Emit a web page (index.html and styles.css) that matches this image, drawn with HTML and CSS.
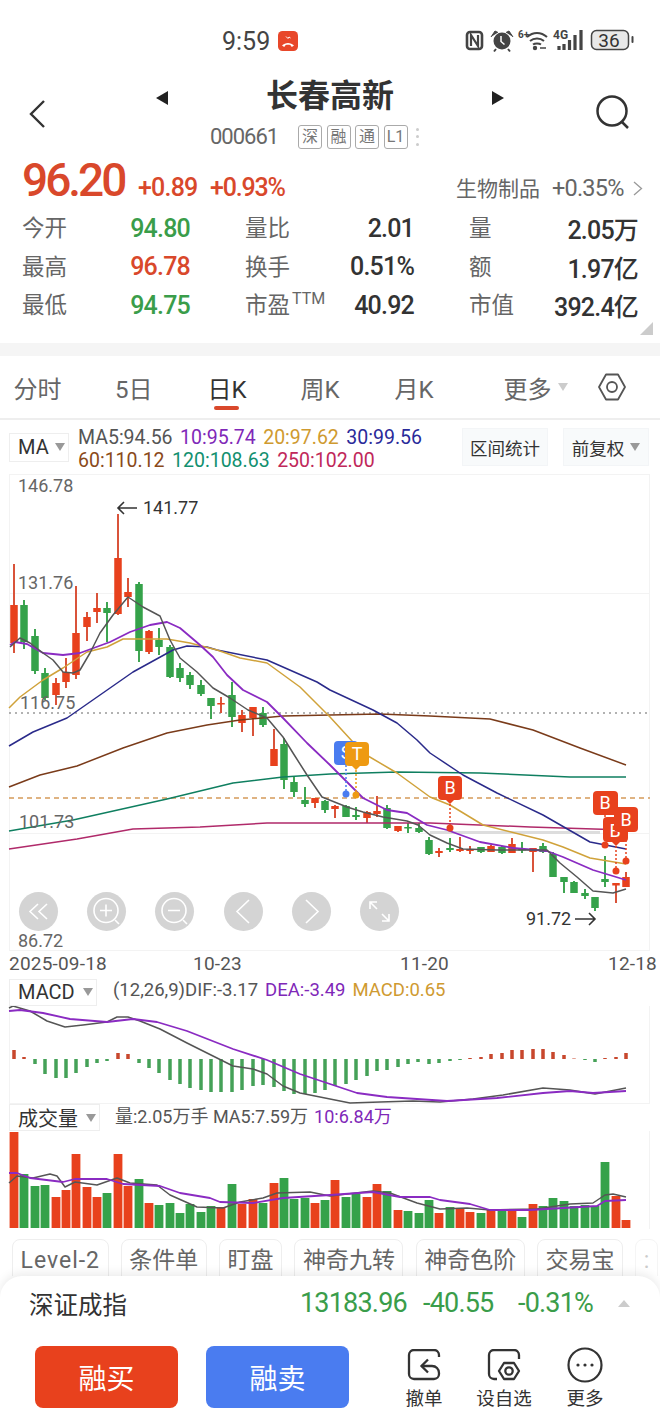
FILE: index.html
```html
<!DOCTYPE html>
<html lang="zh-CN">
<head>
    <meta charset="UTF-8">
    <meta name="viewport" content="width=device-width, initial-scale=1.0">
    <title>长春高新</title>
    <link rel="stylesheet" href="styles.css">
</head>
<body>
    <!-- 状态栏 -->
    <div class="status">
        <span class="status-time">9:59</span>
        <svg class="call-badge" width="20" height="20" viewBox="0 0 20 20">
            <rect width="20" height="20" rx="4.500" fill="#e8472a"/>
            <path d="M4 14.500c3.200-3.400 8.800-3.400 12 0l-2.200 1.500-1.500-2c-1.500-.5-3.100-.5-4.600 0l-1.500 2z" fill="#fff"/>
            <path d="M8 5.500l2 2 1-1.500 1.500 1" fill="none" stroke="#fff" stroke-width="1"/>
        </svg>
        <svg class="status-icons" width="170" height="24" viewBox="465 29 170 24">
            <rect x="467" y="32" width="15" height="17" rx="3" fill="none" stroke="#444" stroke-width="2.600"/>
            <path d="M471 46V35l7 11V35" fill="none" stroke="#444" stroke-width="2.200"/>
            <circle cx="502" cy="41" r="8.500" fill="#444"/>
            <path d="M491 37l4-6 3 1.500M513 37l-4-6-3 1.500" fill="#444" stroke="#444" stroke-width="1"/>
            <path d="M496 49l-2 2.500M508 49l2 2.500" stroke="#444" stroke-width="2"/>
            <path d="M501 36v5.500l3.500 3" fill="none" stroke="#fff" stroke-width="1.500"/>
            <text class="status-small" x="518" y="38">6+</text>
            <path d="M527 37c6-5.500 14-5.500 20 0M530 41c4-3.500 10-3.500 14 0M533 44.500c2-1.500 6-1.500 8 0" fill="none" stroke="#444" stroke-width="2"/>
            <circle cx="535" cy="48" r="2.200" fill="#444"/>
            <path d="M540 48h6" stroke="#444" stroke-width="1.500"/>
            <text class="status-small status-4g" x="553" y="39">4G</text>
            <path d="M559 50v-4M564 50v-6M569.500 50v-10M575 50v-15M581 50v-20" stroke="#444" stroke-width="3.200"/>
            <rect x="591.500" y="30.500" width="37" height="19" rx="5" fill="#e8e8e8" stroke="#444" stroke-width="1.500"/>
            <text class="status-batt" x="609" y="46.500" text-anchor="middle">36</text>
            <rect x="631.500" y="36" width="2" height="7" rx="1" fill="#444"/>
        </svg>
    </div>

    <!-- 标题 -->
    <header class="head">
        <svg class="head-back" width="16" height="30" viewBox="0 0 16 30"><path d="M15 2L2 15l13 13" fill="none" stroke="#333" stroke-width="2.400"/></svg>
        <div class="head-mid">
            <div class="head-title">
                <i class="tri-left"></i>
                <h1>长春高新</h1>
                <i class="tri-right"></i>
            </div>
            <div class="head-sub">
                <span class="code">000661</span>
                <span class="tag">深</span>
                <span class="tag">融</span>
                <span class="tag">通</span>
                <span class="tag">L1</span>
                <span class="tag-more"><i></i><i></i><i></i></span>
            </div>
        </div>
        <svg class="head-search" width="36" height="36" viewBox="0 0 36 36">
            <circle cx="17" cy="16" r="14.500" fill="none" stroke="#333" stroke-width="2.500"/>
            <path d="M27 27l6 6" stroke="#333" stroke-width="2.500"/>
        </svg>
    </header>

    <!-- 行情 -->
    <section class="quote">
        <div class="quote-main">
            <span class="price">96.20</span>
            <span class="change">+0.89</span>
            <span class="change change-pct">+0.93%</span>
            <span class="sector">生物制品</span>
            <span class="sector-pct">+0.35%</span>
            <svg class="sector-arrow" width="10" height="15" viewBox="0 0 10 15"><path d="M1 1l7.500 6.500L1 14" fill="none" stroke="#999" stroke-width="1.300"/></svg>
        </div>
        <div class="stats">
            <div class="stat"><span>今开</span><b class="down">94.80</b></div>
            <div class="stat"><span>量比</span><b>2.01</b></div>
            <div class="stat"><span>量</span><b>2.05万</b></div>
            <div class="stat"><span>最高</span><b class="up">96.78</b></div>
            <div class="stat"><span>换手</span><b>0.51%</b></div>
            <div class="stat"><span>额</span><b>1.97亿</b></div>
            <div class="stat"><span>最低</span><b class="down">94.75</b></div>
            <div class="stat"><span>市盈<sup>TTM</sup></span><b>40.92</b></div>
            <div class="stat"><span>市值</span><b>392.4亿</b></div>
        </div>
        <i class="corner"></i>
    </section>

    <!-- 周期 -->
    <nav class="tabs">
        <span>分时</span>
        <span>5日</span>
        <span class="active">日K</span>
        <span>周K</span>
        <span>月K</span>
        <span>更多<i class="caret caret-light"></i></span>
        <svg width="28" height="28" viewBox="0 0 28 28">
            <path d="M8 1.500h12L27 14l-7 12.500H8L1 14z" fill="none" stroke="#555" stroke-width="1.800" stroke-linejoin="round"/>
            <circle cx="14" cy="14" r="5" fill="none" stroke="#555" stroke-width="1.800"/>
        </svg>
    </nav>

    <div class="toolbar">
        <div class="pick pick-ma">MA<i class="caret"></i></div>
        <div class="ma-values">
            <div><span class="c5">MA5:94.56</span><span class="c10">10:95.74</span><span class="c20">20:97.62</span><span class="c30">30:99.56</span></div>
            <div><span class="c60">60:110.12</span><span class="c120">120:108.63</span><span class="c250">250:102.00</span></div>
        </div>
        <div class="tool-btn btn-range">区间统计</div>
        <div class="tool-btn">前复权<i class="caret"></i></div>
    </div>

    <!-- K线 -->
    <div class="kline">
        <svg class="chart" width="660" height="478" viewBox="0 474 660 478">
            <path class="frame" d="M9.500 474V951M649.500 474V951M9 474.500H650M9 950.500H650M9 593.500H650M9 833.500H650"/>
            <path d="M430 832.500H600" stroke="#ddd" stroke-width="3"/>
            <path class="dotted" d="M9 713H650"/>
            <path class="dashed" d="M9 798H650"/>

            <path class="wick-r" d="M14 564V653M56 678V705M66 658V688M76 586V679M87 612V641M97 593V623M118 514V615M128 578V607M149 630V654M221 697V713M242 710V732M253 707V736M274 729V766M315 798V808M335 805V818M367 811V823M377 796V817M398 826V832M439 848V857M460 837V852M470 846V854M491 845V852M512 838V853M533 848V872M616 883V903M626 872V887"/>
            <path class="wick-g" d="M24 600V649M35 629V674M45 668V700M107 602V642M139 582V662M159 628V655M170 645V678M180 663V682M190 672V689M201 680V696M211 698V719M232 682V727M263 707V727M284 738V789M294 777V797M305 787V807M325 800V813M346 805V817M356 807V820M387 805V829M408 823V833M419 823V833M429 837V855M450 838V852M481 847V853M502 846V854M522 842V853M543 843V853M553 852V877M564 877V893M574 881V893M585 889V899M595 897V911M605 856V887"/>
            <path class="body-r" d="M14 605V643M56 683V695M66 672V682M76 633V675M87 617V627M97 608V612M118 558V614M128 592V597M149 631V652M221 703V704.500M242 715V723M253 707V718M274 749V766M315 798V803M335 806V809M367 812V818M377 811V814M398 826V831M439 851V853M460 849V851M470 849V851M491 846V852M512 844V853M533 848V852M616 883V885.500M626 877V887"/>
            <path class="body-g" d="M24 605V642M35 636V671M45 673V698M107 608V613M139 584V651M159 640V647M170 647V677M180 668V678M190 675V685M201 685V694M211 698V706M232 695V717M263 713V725M284 744V780M294 782V792M305 800V804M325 801V810M346 806V817M356 815V817M387 808V828M408 827V828.500M419 828V832M429 840V854M450 848V850M481 847V852M502 847V853M522 849V850.500M543 846V852M553 854V877M564 877V882M574 882V893M585 893V896M595 897V908M605 879V882"/>

            <polyline class="ln l250" points="9,849 77,839 133,829 200,827 267,823 330,823 430,823 530,827 626,830"/>
            <polyline class="ln l120" points="9,831 73,820 167,799 233,783 283,777 330,774 397,772 480,773 570,777 626,777"/>
            <polyline class="ln l60" points="9,787 40,775 77,766 123,748 167,733 207,725 240,720 283,716 330,715 380,714 430,716 490,719 533,730 580,748 626,765"/>
            <polyline class="ln l30" points="9,746 33,732 67,718 100,695 133,672 173,650 187,646 207,647 217,650 267,660 317,682 330,690 373,710 397,723 417,740 430,753 463,775 497,793 543,815 590,842 626,849"/>
            <polyline class="ln l20" points="9,708 20,697 43,680 63,668 87,652 107,647 123,639 143,639 167,639 190,643 217,650 240,658 267,663 300,687 330,717 363,753 397,773 430,797 450,805 483,825 543,840 563,847 590,858 626,864"/>
            <polyline class="ln l10" points="10,645 15,642 27,644 43,653 63,655 80,653 110,642 130,632 150,625 167,622 180,628 200,645 213,657 227,675 243,690 267,702 283,718 307,743 330,765 347,782 363,798 387,810 407,813 427,825 447,830 480,842 513,848 547,851 563,857 593,870 626,880"/>
            <polyline class="ln l5" points="10,647 20,638 30,643 43,653 53,660 63,672 73,673 80,670 90,653 100,633 113,615 128,597 143,607 160,616 170,640 180,658 197,672 213,688 230,698 248,710 267,718 283,737 293,753 307,775 322,797 347,807 363,812 383,817 407,821 418,825 430,835 447,843 463,849 497,850 547,850 560,863 577,877 593,891 613,893 626,889"/>

            <text class="axis" x="18" y="492">146.78</text>
            <text class="axis" x="18" y="589">131.76</text>
            <text class="axis" x="20" y="709">116.75</text>
            <text class="axis" x="19" y="828">101.73</text>
            <text class="axis" x="18" y="947">86.72</text>
            <path class="arrow" d="M137 508H118M124 502l-6 6 6 6"/>
            <text class="mark" x="143" y="514">141.77</text>
            <text class="mark" x="526" y="925">91.72</text>
            <path class="arrow" d="M575 919H595M589 913l6 6-6 6"/>

            <!-- 买卖点 -->
            <path class="flag-line" stroke="#4a7cf0" d="M346 765V794"/>
            <path class="flag-line" stroke="#ee9a12" d="M356 766V795"/>
            <path class="flag-line" stroke="#e8411d" d="M450 800V828M605 815V845M616 842V871M626 832V861"/>
            <circle cx="346" cy="794" r="3.500" fill="#4a7cf0"/>
            <circle cx="356" cy="795" r="3.500" fill="#ee9a12"/>
            <circle cx="450" cy="828" r="3.500" fill="#e8411d"/>
            <circle cx="605" cy="845" r="3.500" fill="#e8411d"/>
            <circle cx="616" cy="871" r="3.500" fill="#e8411d"/>
            <circle cx="626" cy="861" r="3.500" fill="#e8411d"/>

            <rect x="334" y="741" width="24" height="24" rx="4" fill="#4a7cf0"/>
            <text class="flag" x="346" y="759">S</text>
            <path d="M352 766h8l-4 4z" fill="#ee9a12"/>
            <rect x="345" y="742" width="24" height="24" rx="4" fill="#ee9a12"/>
            <text class="flag" x="357" y="760">T</text>
            <rect x="438" y="776" width="24" height="24" rx="4" fill="#e8411d"/>
            <path d="M446 800h8l-4 4z" fill="#e8411d"/>
            <text class="flag" x="450" y="794">B</text>
            <rect x="593" y="791" width="25" height="24" rx="4" fill="#e8411d"/>
            <text class="flag" x="605" y="809">B</text>
            <rect x="603" y="817" width="25" height="25" rx="4" fill="#e8411d"/>
            <path d="M612 842h8l-4 4z" fill="#e8411d"/>
            <text class="flag" x="615" y="837">B</text>
            <rect x="614" y="807" width="24" height="25" rx="4" fill="#e8411d"/>
            <text class="flag" x="626" y="826">B</text>
        </svg>
        <div class="chart-tools">
            <span><svg viewBox="0 0 39 39"><path class="ic" d="M19 12l-8 7.500 8 7.500M28 12l-8 7.500 8 7.500"/></svg></span>
            <span><svg viewBox="0 0 39 39"><circle class="ic" cx="19" cy="18.500" r="12"/><path class="ic" d="M13 18.500h12M19 12.500v12M28 28l4 4"/></svg></span>
            <span><svg viewBox="0 0 39 39"><circle class="ic" cx="19" cy="18.500" r="12"/><path class="ic" d="M13 18.500h12M28 28l4 4"/></svg></span>
            <span><svg viewBox="0 0 39 39"><path class="ic" d="M25 8L13 19.500 25 31"/></svg></span>
            <span><svg viewBox="0 0 39 39"><path class="ic" d="M14 8l12 11.500L14 31"/></svg></span>
            <span><svg viewBox="0 0 39 39"><path class="ic" d="M10 10l7 7M22 22l7 7M10 17v-7h7M29 22v7h-7"/></svg></span>
        </div>
    </div>

    <div class="dates">
        <span>2025-09-18</span>
        <span>10-23</span>
        <span>11-20</span>
        <span>12-18</span>
    </div>

    <!-- MACD -->
    <div class="sub-head">
        <div class="pick pick-macd">MACD<i class="caret"></i></div>
        <div class="sub-values macd-values"><span class="c5">(12,26,9)DIF:-3.17</span><span class="c10">DEA:-3.49</span><span class="c20">MACD:0.65</span></div>
    </div>
    <svg class="chart" width="660" height="98" viewBox="0 1005 660 98">
        <path class="frame" d="M9.500 1005V1103M649.500 1005V1103M9 1102.500H650"/>
        <path class="bar-r" d="M14 1049V1058M24 1056V1058M118 1052V1058M128 1053V1058M470 1057V1058M481 1056V1058M491 1053V1058M502 1052V1058M512 1049V1058M522 1049V1058M533 1048V1058M543 1048V1058M553 1051V1058M564 1054V1058M574 1057.500V1058M605 1057V1058M616 1056V1058M626 1052V1058"/>
        <path class="bar-g" d="M35 1058V1063M45 1058V1073M56 1058V1077M66 1058V1077M76 1058V1072M87 1058V1066M97 1058V1062M107 1058V1060M139 1058V1062M149 1058V1067M159 1058V1072M170 1058V1079M180 1058V1083M190 1058V1087M201 1058V1089M211 1058V1091M221 1058V1091M232 1058V1091M242 1058V1089M253 1058V1085M263 1058V1084M274 1058V1086M284 1058V1090M294 1058V1093M305 1058V1093M315 1058V1092M325 1058V1089M335 1058V1085M346 1058V1083M356 1058V1079M367 1058V1075M377 1058V1070M387 1058V1069M398 1058V1066M408 1058V1063M418 1058V1061M429 1058V1063M439 1058V1062M450 1058V1060M460 1058V1059M585 1058V1059M595 1058V1061"/>
        <polyline class="ln l5" points="9,1007 13,1005 30,1010 47,1020 65,1026 83,1024 107,1021 117,1016 128,1016 140,1020 160,1028 187,1042 213,1055 233,1065 253,1068 267,1073 283,1085 300,1092 330,1098 350,1102 380,1101 413,1100 440,1101 473,1098 503,1094 543,1087 570,1089 595,1093 626,1087"/>
        <polyline class="ln l10" points="9,1010 20,1009 43,1012 70,1018 107,1021 133,1018 157,1021 187,1030 233,1048 267,1059 300,1073 330,1083 357,1092 387,1096 447,1100 497,1097 543,1092 570,1090 593,1092 626,1090"/>
    </svg>

    <!-- 成交量 -->
    <div class="sub-head vol-head">
        <div class="pick pick-vol">成交量<i class="caret"></i></div>
        <div class="sub-values vol-values"><span class="c5">量:2.05万手 MA5:7.59万</span><span class="c10">10:6.84万</span></div>
    </div>
    <svg class="chart" width="660" height="98" viewBox="0 1130 660 98">
        <path class="frame" d="M649.500 1130V1228"/>
        <path class="vol-r" d="M14 1131V1227M56 1196V1227M66 1189V1227M76 1153V1227M87 1186V1227M97 1196V1227M118 1153V1227M128 1185V1227M149 1202V1227M221 1206V1227M242 1203V1227M253 1198V1227M274 1182V1227M315 1202V1227M335 1179V1227M367 1196V1227M377 1183V1227M398 1209V1227M439 1212V1227M460 1208V1227M470 1211V1227M491 1209V1227M512 1208V1227M533 1203V1227M616 1195V1227M626 1219V1227"/>
        <path class="vol-g" d="M24 1173V1227M35 1185V1227M45 1184V1227M107 1192V1227M139 1178V1227M159 1204V1227M170 1202V1227M180 1212V1227M190 1203V1227M201 1211V1227M211 1205V1227M232 1183V1227M263 1202V1227M284 1177V1227M294 1198V1227M305 1197V1227M325 1199V1227M346 1196V1227M356 1193V1227M387 1190V1227M408 1210V1227M419 1212V1227M429 1199V1227M450 1206V1227M481 1212V1227M502 1208V1227M522 1216V1227M543 1205V1227M553 1197V1227M564 1200V1227M574 1205V1227M585 1204V1227M595 1205V1227M605 1161V1227"/>
        <polyline class="ln l5" points="9,1182 17,1175 33,1177 50,1173 57,1175 65,1186 75,1181 97,1184 117,1177 130,1182 157,1184 170,1194 197,1206 223,1207 240,1201 263,1197 277,1192 310,1191 330,1195 373,1190 390,1192 417,1202 440,1208 467,1207 490,1209 537,1208 570,1203 593,1202 605,1194 613,1193 626,1196"/>
        <polyline class="ln l10" points="9,1172 17,1172 30,1177 63,1181 75,1178 107,1178 123,1183 160,1185 180,1192 210,1197 220,1201 253,1202 283,1197 330,1194 373,1191 400,1196 430,1196 440,1199 470,1203 490,1209 530,1209 563,1207 597,1205 605,1200 626,1199"/>
    </svg>

    <div class="chips">
        <span class="chip chip-latin">Level-2</span>
        <span class="chip">条件单</span>
        <span class="chip">盯盘</span>
        <span class="chip">神奇九转</span>
        <span class="chip">神奇色阶</span>
        <span class="chip">交易宝</span>
        <span class="chip chip-fade">:</span>
    </div>

    <!-- 底部 -->
    <footer class="sheet">
        <div class="index-row">
            <span class="index-name">深证成指</span>
            <span class="index-num">13183.96</span>
            <span class="index-num">-40.55</span>
            <span class="index-num">-0.31%</span>
            <i class="index-tri"></i>
        </div>
        <div class="trade-row">
            <button class="trade buy">融买</button>
            <button class="trade sell">融卖</button>
            <div class="act act-cancel">
                <svg width="34" height="32" viewBox="0 0 34 32">
                    <path d="M32 8V6a5 5 0 0 0-5-5H7a5 5 0 0 0-5 5V25a5 5 0 0 0 5 5H27a5 5 0 0 0 5-5V24c0-4-3-7-7-7H14.500" fill="none" stroke="#333" stroke-width="2.300"/>
                    <path d="M21 10.500L14.500 17l6.500 6.500" fill="none" stroke="#333" stroke-width="2.300"/>
                </svg>
                <span>撤单</span>
            </div>
            <div class="act act-watch">
                <svg width="34" height="32" viewBox="0 0 34 32">
                    <path d="M32 10V6a5 5 0 0 0-5-5H7a5 5 0 0 0-5 5V25a5 5 0 0 0 5 5H10" fill="none" stroke="#333" stroke-width="2.300"/>
                    <path d="M17 14h10l5 8-5 8H17l-5-8z" fill="none" stroke="#333" stroke-width="2.300" stroke-linejoin="round"/>
                    <circle cx="22" cy="22" r="3.700" fill="none" stroke="#333" stroke-width="2.300"/>
                </svg>
                <span>设自选</span>
            </div>
            <div class="act act-more">
                <svg width="36" height="36" viewBox="0 0 36 36">
                    <circle cx="18" cy="18" r="16.500" fill="none" stroke="#333" stroke-width="2.200"/>
                    <circle cx="11" cy="18" r="1.600" fill="#333"/>
                    <circle cx="18" cy="18" r="1.600" fill="#333"/>
                    <circle cx="25" cy="18" r="1.600" fill="#333"/>
                </svg>
                <span>更多</span>
            </div>
        </div>
    </footer>
</body>
</html>
```

FILE: styles.css
```css
* {
    box-sizing: border-box;
}
html, body {
    margin: 0;
    padding: 0;
}
body {
    width: 660px;
    height: 1420px;
    overflow: hidden;
    background: #fff;
    color: #333;
    font-family: Roboto, "Noto Sans CJK SC", sans-serif;
}
i {
    display: block;
    font-style: normal;
}

/* 状态栏 */
.status {
    position: relative;
    height: 76px;
    padding: 6px 0 0 222px;
    display: flex;
    align-items: center;
}
.status-time {
    font-size: 25px;
    color: #444;
    width: 56px;
}
.status-icons {
    position: absolute;
    left: 465px;
    top: 29px;
}
.status-small {
    font-size: 10px;
    font-weight: 700;
    fill: #444;
}
.status-4g {
    font-size: 12px;
}
.status-batt {
    font-size: 19px;
    fill: #333;
}

/* 标题 */
.head {
    height: 74px;
    display: flex;
    align-items: center;
}
.head-back {
    margin-left: 29px;
    margin-top: 1px;
}
.head-mid {
    width: 348px;
    margin-left: 111px;
}
.head-title {
    height: 36px;
    display: flex;
    justify-content: space-between;
    align-items: center;
}
.head-title h1 {
    margin: 0;
    font-size: 32px;
    line-height: 36px;
    font-weight: 700;
    color: #333;
}
.tri-left, .tri-right {
    width: 0;
    height: 0;
    margin-top: 5px;
    border-top: 7.5px solid transparent;
    border-bottom: 7.5px solid transparent;
}
.tri-left {
    border-right: 12px solid #222;
}
.tri-right {
    border-left: 12px solid #222;
}
.head-sub {
    display: flex;
    align-items: center;
    height: 24px;
    margin-top: 11px;
    padding-left: 54px;
}
.code {
    width: 88px;
    font-size: 22px;
    letter-spacing: -1px;
    color: #666;
}
.tag {
    width: 24px;
    height: 24px;
    margin-right: 4.5px;
    border: 1px solid #aaa;
    border-radius: 3px;
    font-size: 16px;
    line-height: 22px;
    text-align: center;
    color: #777;
}
.tag-more {
    margin-left: 4px;
}
.tag-more i {
    width: 3px;
    height: 3px;
    margin: 4.5px 0;
    border-radius: 50%;
    background: #ccc;
}
.head-search {
    margin-left: 91px;
}

/* 行情 */
.quote {
    position: relative;
    height: 193px;
    padding: 0 22px;
}
.quote-main {
    height: 57px;
    display: flex;
    align-items: baseline;
    padding-top: 7px;
    white-space: nowrap;
}
.quote-main > * {
    flex: none;
}
.price {
    width: 116px;
    font-size: 46px;
    line-height: 46px;
    letter-spacing: -3px;
    font-weight: 500;
    color: #d9482b;
}
.change {
    width: 72px;
    font-size: 25px;
    letter-spacing: -.8px;
    color: #d9482b;
    font-weight: 500;
}
.change-pct {
    letter-spacing: -1.2px;
}
.sector {
    margin-left: 174px;
    font-size: 21px;
    color: #666;
}
.sector-pct {
    width: 69px;
    margin-left: 12px;
    font-size: 23.500px;
    letter-spacing: -.8px;
    color: #666;
}
.sector-arrow {
    margin-left: 12px;
}
.stats {
    display: grid;
    grid-template-columns: 168px 169px 169px;
    column-gap: 55px;
    grid-auto-rows: 38.5px;
}
.stat {
    display: flex;
    justify-content: space-between;
    align-items: center;
}
.stat span {
    font-size: 22.5px;
    color: #666;
}
.stat sup {
    margin-left: 2px;
    font-size: 16px;
    line-height: 0;
    vertical-align: 9px;
    color: #666;
}
.stat b {
    margin-top: 4px;
    font-size: 25px;
    font-weight: 500;
    letter-spacing: -.8px;
    color: #333;
}
.stat b.up {
    color: #d9482b;
}
.stat b.down {
    color: #3a9d4a;
}
.corner {
    position: absolute;
    right: 7px;
    bottom: 8px;
    width: 0;
    height: 0;
    border-left: 13px solid transparent;
    border-bottom: 13px solid #ccc;
}

/* 周期 */
.tabs {
    height: 77px;
    padding-left: 13.5px;
    border-top: 13px solid #f5f5f5;
    border-bottom: 2px solid #eee;
    display: grid;
    grid-template-columns: 101.5px 92.5px 93px 94px 109px 94.5px 28px;
    align-items: center;
    font-size: 24px;
    color: #666;
}
.tabs span {
    position: relative;
    display: flex;
    align-items: center;
}
.tabs .active {
    color: #333;
}
.tabs .active::after {
    content: "";
    position: absolute;
    left: 6.5px;
    bottom: -5.5px;
    width: 25px;
    height: 4px;
    border-radius: 2px;
    background: #d9482b;
}
.caret {
    width: 0;
    height: 0;
    margin-left: 6px;
    border-left: 5px solid transparent;
    border-right: 5px solid transparent;
    border-top: 8px solid #999;
}
.caret-light {
    border-top-color: #ccc;
}

.toolbar {
    height: 54px;
    display: flex;
    align-items: center;
}
.pick {
    display: flex;
    align-items: center;
    margin-left: 9px;
    padding-left: 8px;
    border: 1px solid #eee;
    font-size: 20px;
    color: #333;
}
.pick-ma {
    width: 60px;
    height: 29px;
}
.ma-values {
    margin: 3px 0 0 9px;
    font-size: 19.5px;
    line-height: 23px;
}
.ma-values span {
    margin-right: 7.5px;
}
.tool-btn {
    display: flex;
    align-items: center;
    justify-content: center;
    width: 86px;
    height: 38px;
    margin-left: 15px;
    border: 1px solid #f3f5f7;
    background: #f8fafb;
    font-size: 17.500px;
    color: #333;
}
.btn-range {
    margin-left: auto;
}
.toolbar .tool-btn:last-child {
    margin-right: 11px;
}
.c5 { color: #555; }
.c10 { color: #7f28b8; }
.c20 { color: #cf9a30; }
.c30 { color: #2a2a9a; }
.c60 { color: #8a4a1a; }
.c120 { color: #12906f; }
.c250 { color: #c0285a; }

/* 图表 */
.kline {
    position: relative;
}
.chart {
    display: block;
}
.frame {
    fill: none;
    stroke: #f3f3f3;
    stroke-width: 1;
}
.dotted {
    stroke: #999;
    stroke-width: 1.5;
    stroke-dasharray: 2 4;
}
.dashed {
    stroke: #d59a5a;
    stroke-width: 1.3;
    stroke-dasharray: 5 4;
}
.wick-r, .wick-g, .body-r, .body-g {
    fill: none;
}
.wick-r { stroke: #d9533a; stroke-width: 2; }
.wick-g { stroke: #3fa552; stroke-width: 2; }
.body-r { stroke: #e8411d; stroke-width: 7.500; }
.body-g { stroke: #35a24a; stroke-width: 7.500; }
.bar-r { stroke: #c8472d; stroke-width: 3.500; }
.bar-g { stroke: #45a158; stroke-width: 3.500; }
.vol-r { stroke: #e8411d; stroke-width: 8.800; }
.vol-g { stroke: #35a24a; stroke-width: 8.800; }
.ln {
    fill: none;
    stroke-width: 1.500;
    stroke-linejoin: round;
}
.l5 { stroke: #555; }
.l10 { stroke: #8a2bc2; stroke-width: 1.800; }
.l20 { stroke: #d0a23a; }
.l30 { stroke: #2a2a8a; }
.l60 { stroke: #7a3b1a; }
.l120 { stroke: #0f7f60; }
.l250 { stroke: #b02a6a; }
.axis {
    font-size: 18px;
    fill: #666;
}
.mark {
    font-size: 18px;
    fill: #333;
}
.arrow {
    fill: none;
    stroke: #333;
    stroke-width: 1.600;
}
.flag-line {
    fill: none;
    stroke-width: 1.500;
    stroke-dasharray: 2 2;
}
.flag {
    font-size: 18px;
    fill: #fff;
    text-anchor: middle;
}
.chart-tools {
    position: absolute;
    left: 19px;
    top: 418px;
    display: flex;
    gap: 29.2px;
}
.chart-tools span {
    width: 39px;
    height: 39px;
    border-radius: 50%;
    background: #d4d4d4;
}
.chart-tools svg {
    display: block;
}
.ic {
    fill: none;
    stroke: #fff;
    stroke-width: 1.600;
}

.dates {
    height: 25px;
    padding: 0 0 4px 9px;
    display: grid;
    grid-template-columns: 184px 207px 208px 50px;
    align-items: center;
    font-size: 19px;
    letter-spacing: .2px;
    color: #555;
}

.sub-head {
    height: 29px;
    display: flex;
    align-items: center;
}
.vol-head {
    height: 27px;
}
.pick-macd {
    width: 88px;
    height: 27px;
    margin-top: 1px;
}
.pick-vol {
    width: 91px;
    height: 27px;
}
.pick-macd .caret, .pick-vol .caret {
    margin-left: 8px;
}
.sub-values {
    margin-left: 16px;
    font-size: 18px;
}
.sub-values span {
    margin-right: 6px;
}
.macd-values {
    margin-top: -4px;
    font-size: 18.500px;
}
.macd-values span {
    margin-right: 7px;
}
.vol-values {
    margin-top: -6px;
    margin-left: 15px;
}

/* 功能入口 */
.chips {
    height: 47px;
    padding: 10px 0 0 12px;
    overflow: hidden;
    display: flex;
    gap: 12.3px;
}
.chip {
    flex: none;
    height: 50px;
    padding: 5px 7.500px 0;
    border: 1px solid #eee;
    border-radius: 8px;
    font-size: 23px;
    line-height: 32px;
    color: #666;
}
.chip-latin {
    letter-spacing: 1px;
}
.chip-fade {
    color: #ccc;
    border-color: #f5f5f5;
}

/* 底部 */
.sheet {
    position: relative;
    height: 145px;
    border-radius: 22px 22px 0 0;
    background: #fff;
    box-shadow: 0 -3px 10px rgba(0, 0, 0, .08);
}
.index-row {
    height: 54px;
    padding-left: 29px;
    display: grid;
    grid-template-columns: 271px 123px 95px 100px 12px;
    align-items: center;
}
.index-name {
    font-size: 24.500px;
    color: #333;
}
.index-num {
    font-size: 27px;
    letter-spacing: -.8px;
    color: #3a9d4a;
}
.index-tri {
    width: 0;
    height: 0;
    border-left: 6px solid transparent;
    border-right: 6px solid transparent;
    border-bottom: 7px solid #ccc;
}
.trade-row {
    display: flex;
    padding: 16px 0 0 35px;
}
.trade {
    width: 143px;
    height: 62px;
    margin-right: 28px;
    border: 0;
    border-radius: 8px;
    font-family: inherit;
    font-size: 28px;
    color: #fff;
}
.buy {
    background: #e8411d;
}
.sell {
    background: #4a7cf0;
    margin-right: 0;
}
.act {
    display: flex;
    flex-direction: column;
    align-items: center;
    font-size: 18.500px;
    color: #333;
}
.act-cancel {
    width: 38px;
    margin: 3px 0 0 56px;
}
.act-cancel span, .act-watch span {
    margin-top: 3px;
}
.act-watch {
    width: 56px;
    margin: 3px 0 0 33px;
}
.act-more {
    width: 38px;
    margin: 1px 0 0 34px;
}
.act-more span {
    margin-top: 1px;
}
```
